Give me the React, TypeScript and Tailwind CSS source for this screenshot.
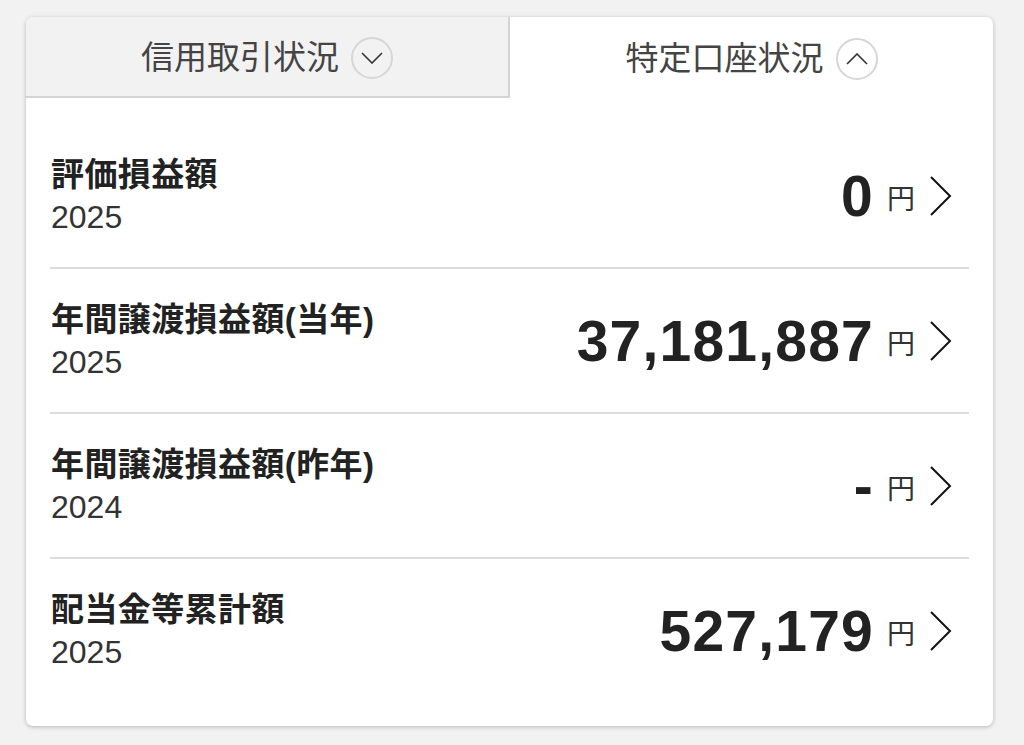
const rows = [
  { title: "評価損益額", year: "2025", value: "0" },
  { title: "年間譲渡損益額(当年)", year: "2025", value: "37,181,887" },
  { title: "年間譲渡損益額(昨年)", year: "2024", value: "-" },
  { title: "配当金等累計額", year: "2025", value: "527,179" },
];

const font = "font-['Liberation_Sans','Noto_Sans_CJK_JP',sans-serif]";

function CircleChevron({ up }: { up?: boolean }) {
  return (
    <span className="flex h-[42px] w-[42px] items-center justify-center rounded-full border-2 border-[#d6d6d6]">
      <svg width="22" height="12" viewBox="0 0 22 12" fill="none">
        <polyline
          points={up ? "1,11 11,1 21,11" : "1,1 11,11 21,1"}
          stroke="#333"
          strokeWidth="1.6"
          strokeLinejoin="miter"
        />
      </svg>
    </span>
  );
}

function Chevron() {
  return (
    <svg width="24" height="40" viewBox="0 0 24 40" fill="none">
      <polyline points="2,1 21,20 2,39" stroke="#111" strokeWidth="2" />
    </svg>
  );
}

export default function App() {
  return (
    <div className={`min-h-[745px] w-[1024px] bg-[#f2f2f2] pl-[26px] pr-[31px] pt-[17px] ${font}`}>
      <div className="overflow-hidden rounded-[7px] bg-white shadow-[0_1px_4px_rgba(0,0,0,0.25)]">
        <div className="flex h-[81px]">
          <div className="flex w-[484px] items-center justify-center gap-[12px] border-b-2 border-r-2 border-[#d4d4d4] bg-[#f2f2f2] pt-[2px]">
            <span className="text-[33px] leading-none text-[#444]">信用取引状況</span>
            <CircleChevron />
          </div>
          <div className="flex flex-1 items-center justify-center gap-[12px] pt-[2px]">
            <span className="text-[33px] leading-none text-[#444]">特定口座状況</span>
            <CircleChevron up />
          </div>
        </div>
        <div className="px-[24px] pb-[24px] pt-[26px]">
          {rows.map((r, i) => (
            <div key={r.title}>
              {i > 0 && <div className="h-[2px] bg-[#dcdcdc]" />}
              <div className="flex items-center justify-between pb-[29px] pl-[1px] pr-[16px] pt-[30px]">
                <div className="flex flex-col">
                  <span className="text-[33px] font-bold leading-[42px] tracking-[0.4px] text-[#222]">{r.title}</span>
                  <span className="text-[32px] leading-[42px] text-[#333]">{r.year}</span>
                </div>
                <div className="flex items-center">
                  <span className="text-[57px] font-bold leading-none tracking-[1.2px] text-[#222]">{r.value}</span>
                  <span className="ml-[13px] mt-[8px] text-[28px] leading-none text-[#333]">円</span>
                  <span className="ml-[14px] flex">
                    <Chevron />
                  </span>
                </div>
              </div>
            </div>
          ))}
        </div>
      </div>
    </div>
  );
}
